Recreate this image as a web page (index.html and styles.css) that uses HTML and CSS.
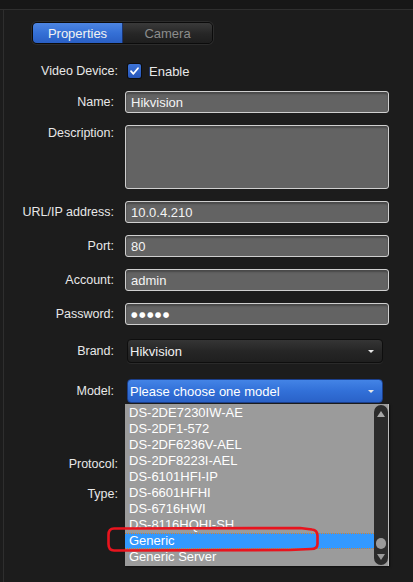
FILE: index.html
```html
<!DOCTYPE html>
<html>
<head>
<meta charset="utf-8">
<link rel="stylesheet" href="styles.css">
</head>
<body>
<div class="topband"></div>
<div class="panel">
  <div class="tabs">
    <div class="tab active">Properties</div>
    <div class="tab">Camera</div>
  </div>

  <div class="row r-video">
    <div class="label wide">Video Device:</div>
    <div class="check"><svg width="13" height="14" viewBox="0 0 13 14"><path d="M3 7.2 L5.4 9.8 L10 4.2" fill="none" stroke="#fff" stroke-width="1.8" stroke-linecap="round" stroke-linejoin="round"/></svg></div>
    <div class="enable">Enable</div>
  </div>

  <div class="row r-name">
    <div class="label">Name:</div>
    <div class="input">Hikvision</div>
  </div>

  <div class="row r-desc">
    <div class="label">Description:</div>
    <div class="input area"></div>
  </div>

  <div class="row r-std">
    <div class="label">URL/IP address:</div>
    <div class="input">10.0.4.210</div>
  </div>

  <div class="row r-std">
    <div class="label">Port:</div>
    <div class="input">80</div>
  </div>

  <div class="row r-std">
    <div class="label">Account:</div>
    <div class="input">admin</div>
  </div>

  <div class="row r-std">
    <div class="label">Password:</div>
    <div class="input"><span class="dots">●●●●●</span></div>
  </div>

  <div class="row r-brand">
    <div class="label">Brand:</div>
    <div class="select dark">Hikvision<span class="arrow"></span></div>
  </div>

  <div class="row r-model">
    <div class="label">Model:</div>
    <div class="select blue">Please choose one model<span class="arrow"></span></div>
    <div class="droplist">
      <div class="items">
        <div class="item">DS-2DE7230IW-AE</div>
        <div class="item">DS-2DF1-572</div>
        <div class="item">DS-2DF6236V-AEL</div>
        <div class="item">DS-2DF8223I-AEL</div>
        <div class="item">DS-6101HFI-IP</div>
        <div class="item">DS-6601HFHI</div>
        <div class="item">DS-6716HWI</div>
        <div class="item">DS-8116HQHI-SH</div>
        <div class="item sel">Generic</div>
        <div class="item">Generic Server</div>
      </div>
      <div class="scrollbar">
        <span class="up"></span>
        <span class="thumb"></span>
        <span class="down"></span>
      </div>
    </div>
  </div>

  <div class="row r-proto">
    <div class="label wide">Protocol:</div>
  </div>
  <div class="row r-type">
    <div class="label wide">Type:</div>
  </div>
</div>

<svg class="annot" width="220" height="32" viewBox="104 524 220 32">
  <path d="M114 528.5 L300 528 L312 529.5 Q317.5 530 317.5 536 L317.5 544 Q317.5 549 311 549 L290 550 L114 550.5 Q108.5 550.5 108.5 544 L108.5 535 Q108.5 528.5 114 528.5 Z" fill="none" stroke="#e8141e" stroke-width="2.6" stroke-linejoin="round"/>
</svg>
</body>
</html>
```
FILE: styles.css
```css
html, body {
  margin: 0;
  padding: 0;
  background: #1c1c1c;
  width: 413px;
  height: 582px;
  overflow: hidden;
  font-family: "Liberation Sans", Arial, sans-serif;
  font-size: 12.5px;
  color: #e8e8e8;
}

.topband {
  height: 9px;
  background: #171717;
  border-bottom: 1px solid #2f2f2f;
}

.panel {
  margin-left: 3px;
  border-left: 1px solid #2e2e2e;
  height: 572px;
  padding-top: 12px;
  box-sizing: border-box;
  position: relative;
}

.tabs {
  margin-left: 28px;
  width: 181px;
  height: 22px;
  display: flex;
  border: 1px solid #0b0b0b;
  border-radius: 5px;
  box-shadow: 0 0 0 1px #2c2c2c;
  overflow: hidden;
  box-sizing: border-box;
}

.tab {
  flex: 1;
  display: flex;
  align-items: center;
  justify-content: center;
  color: #8c8c8c;
  background: linear-gradient(#3a3a3a, #262626 55%, #1e1e1e);
  font-size: 13px;
}

.tab.active {
  flex: 0 0 89px;
  color: #f2f2f2;
  background: linear-gradient(#4d85e2, #3570d6 50%, #2a5fc4);
  border-right: 1px solid #1a3470;
}

.row {
  display: flex;
  align-items: center;
}

.label {
  width: 110px;
  text-align: right;
  flex: none;
  margin-right: 11px;
  white-space: nowrap;
}

.label.wide {
  width: 114px;
  margin-right: 10px;
}

.r-video { margin-top: 17px; height: 20px; }
.r-name { margin-top: 10px; }
.r-desc { margin-top: 12px; align-items: flex-start; }
.r-desc .label { padding-top: 1px; }
.r-std { margin-top: 12px; }
.r-brand { margin-top: 14px; }
.r-model { margin-top: 16px; position: relative; }
.r-proto { margin-top: 51px; height: 20px; }
.r-type { margin-top: 10px; height: 20px; }

.check {
  width: 13px;
  height: 14px;
  box-sizing: border-box;
  border-radius: 2px;
  background: linear-gradient(#3d74d8, #2655b8);
  box-shadow: 0 0 0 1px #0d0d0d;
  display: flex;
}

.check svg { display: block; }

.enable {
  margin-left: 8px;
  font-size: 13px;
}

.input {
  width: 264px;
  height: 22px;
  box-sizing: border-box;
  background: #636363;
  border: 1px solid #cfcfcf;
  border-radius: 3px;
  box-shadow: inset 0 2px 2px rgba(0, 0, 0, 0.28);
  color: #f4f4f4;
  padding-left: 5px;
  display: flex;
  align-items: center;
  font-size: 13px;
}

.input.area {
  height: 64px;
}

.dots {
  font-family: "DejaVu Sans", sans-serif;
  font-size: 7.5px;
  letter-spacing: 1.4px;
  color: #ffffff;
}

.select {
  position: relative;
  margin-left: 2px;
  width: 256px;
  height: 24px;
  box-sizing: border-box;
  border-radius: 4px;
  padding-left: 2px;
  display: flex;
  align-items: center;
  color: #f2f2f2;
  font-size: 13px;
}

.select.dark {
  background: linear-gradient(#353535, #262626 50%, #1f1f1f);
  border: 1px solid #0e0e0e;
  box-shadow: 0 1px 0 #2a2a2a;
}

.select.blue {
  background: linear-gradient(#4384e6, #3270d8 50%, #2a62c8);
  border: 1px solid #1b3f8c;
  color: #ffffff;
}

.arrow {
  position: absolute;
  right: 8px;
  top: 10px;
  width: 0;
  height: 0;
  border-left: 3px solid transparent;
  border-right: 3px solid transparent;
  border-top: 3px solid #e6e6e6;
}

.droplist {
  position: absolute;
  left: 121px;
  top: 25px;
  width: 264px;
  height: 162px;
  background: #9b9b9b;
  box-sizing: border-box;
  border-right: 1px solid #bdbdbd;
  box-shadow: 1px 1px 2px rgba(0, 0, 0, 0.5);
  display: flex;
  overflow: hidden;
  z-index: 5;
}

.items {
  flex: 1;
  padding-top: 1px;
}

.item {
  height: 16px;
  line-height: 16px;
  padding-left: 4px;
  color: #ffffff;
  font-size: 13px;
  box-sizing: border-box;
  white-space: nowrap;
}

.item.sel {
  background: #3399ff;
  border-top: 1px dotted #d9822b;
  border-bottom: 1px dotted #d9822b;
  line-height: 14px;
}

.scrollbar {
  width: 14px;
  margin: 1px 0 1px 0;
  background: #2b2b2b;
  border-radius: 7px;
  position: relative;
  flex: none;
}

.up {
  position: absolute;
  left: 3px;
  top: 6px;
  width: 0;
  height: 0;
  border-left: 4px solid transparent;
  border-right: 4px solid transparent;
  border-bottom: 6px solid #a8a8a8;
}

.thumb {
  position: absolute;
  left: 2px;
  top: 133px;
  width: 10px;
  height: 11px;
  border-radius: 5px;
  background: #9a9a9a;
}

.down {
  position: absolute;
  left: 3px;
  top: 149px;
  width: 0;
  height: 0;
  border-left: 4px solid transparent;
  border-right: 4px solid transparent;
  border-top: 6px solid #9a9a9a;
}

.annot {
  position: absolute;
  left: 104px;
  top: 524px;
  z-index: 10;
}
```
